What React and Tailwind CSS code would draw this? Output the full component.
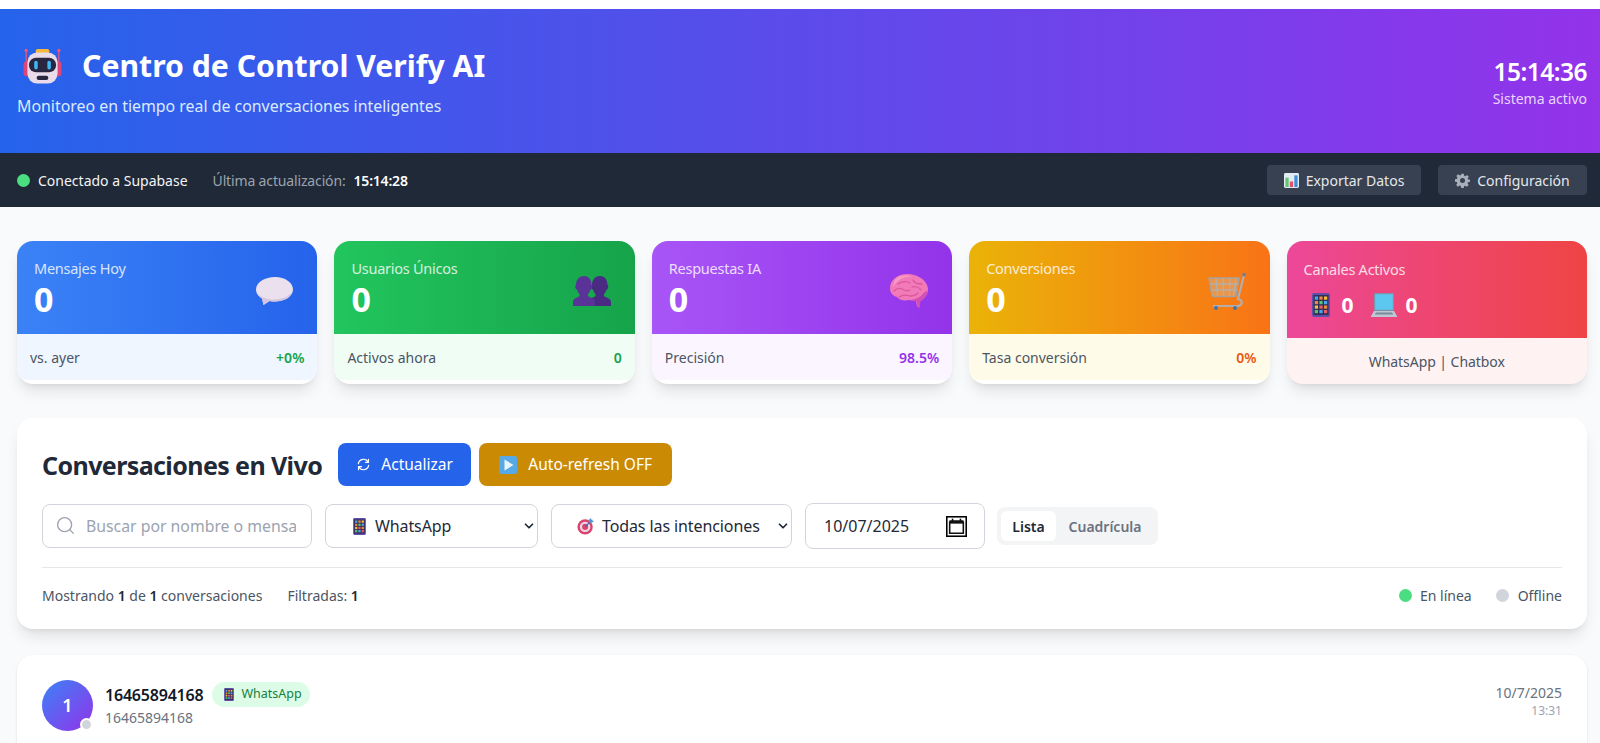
import React from 'react';
import { Search, ChevronDown } from 'lucide-react';

const Robot = ({ className }) => (
  <svg viewBox="0 0 40 37" className={className}>
    <rect x="2.6" y="3" width="1.3" height="14" fill="#e8567a" />
    <rect x="36.1" y="3" width="1.3" height="14" fill="#e8567a" />
    <circle cx="3.2" cy="2.5" r="1.7" fill="#f0567e" />
    <circle cx="36.8" cy="2.5" r="1.7" fill="#f0567e" />
    <rect x="0.5" y="14" width="6" height="15" rx="2.5" fill="#e0457a" />
    <rect x="33.5" y="14" width="6" height="15" rx="2.5" fill="#e0457a" />
    <rect x="13" y="1" width="14" height="5" rx="2" fill="#f5b83d" />
    <rect x="4.5" y="4.5" width="31" height="32" rx="10" fill="#e9dbe9" />
    <rect x="6" y="10" width="28" height="15" rx="7.5" fill="#29263f" />
    <rect x="11.5" y="13" width="3.6" height="9" rx="1.8" fill="#3fb7f5" />
    <rect x="25" y="13" width="3.6" height="9" rx="1.8" fill="#3fb7f5" />
    <rect x="14" y="28.5" width="12" height="4.5" rx="2.2" fill="#29263f" />
  </svg>
);

const Balloon = ({ className }) => (
  <svg viewBox="0 0 37 28" className={className}>
    <path d="M19 0C9 0 0 5 0 12.5c0 4 2.5 7 6 9l1.500 6.500 6-4c2 .5 3.500.5 5.500.5 10 0 18-5 18-12S29 0 19 0z" fill="#ebe0ee" />
    <path d="M2 17c3 3.500 9 5.500 16 5.500 8 0 15-3 18-8-1.500 6-9 10-17 10-2 0-3.500 0-5.500-.5l-6 4L6 21.500c-2-1-3.200-2.800-4-4.500z" fill="#d5c5dc" />
  </svg>
);

const Bust = ({ x, fill }) => (
  <path
    transform={`translate(${x} 0)`}
    d="M11 0c5 0 7.500 4 7.500 9 .8.200 1 1.500.5 3-.3 1-1 1.500-1.500 1.500-.5 2-1.500 3.500-2.500 4.500v2c1 1.500 7 2 7 6v4H0v-4c0-4 5.500-4.500 6.500-6v-2c-1-1-2-2.500-2.500-4.500-.5 0-1.200-.5-1.500-1.500-.5-1.500-.3-2.800.5-3C3 4 6 0 11 0z"
    fill={fill}
  />
);

const People = ({ className }) => (
  <svg viewBox="0 0 38 30" className={className}>
    <Bust x={16} fill="#4a2a82" />
    <Bust x={0} fill="#5a3398" />
  </svg>
);

const Brain = ({ className }) => (
  <svg viewBox="0 0 38 34" className={className}>
    <path d="M17 0C8 0 0 6 0 14c0 5 3 8 7 9 2 3 7 4 12 3 2 0 4 1 7 1l1 5 2 2 1-7c4-2 8-6 8-12C38 7 28 0 17 0z" fill="#f27ab8" />
    <path d="M20 26c6-.5 11-3 14-7.500l3.500-2c-.5 5-3.500 8.500-7 10.500l-1 7-2-2-1-5c-3 0-5.500-.5-6.500-1z" fill="#d44fb4" />
    <path d="M8 3c4-2 10-2 14-.5-5 0-10 1-14 4.500-2 1.500-4 4-5 6 0-4 2-8 5-10z" fill="#f79bc4" />
    <g fill="none" stroke="#d9589f" strokeWidth="1.300" strokeLinecap="round">
      <path d="M8 10c4-3 9-3 12-1" />
      <path d="M4 17c3-3 7-3 10-1 2 1 4 1 6 0" />
      <path d="M23 6c1 3 5 4 9 4" />
      <path d="M22 13c3-1 7 0 9 3" />
      <path d="M9 23c3-2 8-2 11-1 3 0 6-1 8-3" />
    </g>
  </svg>
);

const Cart = ({ className }) => (
  <svg viewBox="0 0 38 37" className={className}>
    <path d="M1 5h30l-3 17c-.2 1-1 1.500-2 1.500H6c-1 0-1.800-.5-2-1.500z" fill="#d8c6a8" fillOpacity=".35" stroke="#a8a29c" strokeWidth="1.600" />
    <path d="M8 5l1.500 18M15 5l.7 18M22 5l-.7 18M28 5l-2.500 18M2 11h28M3 17h26" fill="none" stroke="#b5afa8" strokeWidth="1.300" />
    <path d="M36 2l-6 24c5 1 5 6 0 7H5" fill="none" stroke="#b3aeaa" strokeWidth="2.200" />
    <rect x="34.5" y="0" width="3.2" height="3.2" fill="#6d7f99" />
    <circle cx="8" cy="35" r="2" fill="#4473a8" />
    <circle cx="27" cy="35" r="2" fill="#4473a8" />
  </svg>
);

const Phone = ({ className }) => (
  <svg viewBox="0 0 18 24" className={className}>
    <rect x="0" y="0" width="18" height="24" rx="2" fill="#5f4fa6" />
    <rect x="1.5" y="2" width="15" height="20" fill="#322e5c" />
    <rect x="2.8" y="3.5" width="3.2" height="3.2" fill="#4aa6ee" />
    <rect x="7.4" y="3.5" width="3.2" height="3.2" fill="#ee8a3c" />
    <rect x="12" y="3.5" width="3.2" height="3.2" fill="#f5c03d" />
    <rect x="2.8" y="8" width="3.2" height="3.2" fill="#ee8a3c" />
    <rect x="7.4" y="8" width="3.2" height="3.2" fill="#5cc46a" />
    <rect x="12" y="8" width="3.2" height="3.2" fill="#4aa6ee" />
    <rect x="2.8" y="12.5" width="3.2" height="3.2" fill="#f5c03d" />
    <rect x="7.4" y="12.5" width="3.2" height="3.2" fill="#e85d5d" />
    <rect x="12" y="12.5" width="3.2" height="3.2" fill="#ee8a3c" />
    <rect x="2.8" y="17" width="3.2" height="3.2" fill="#5cc46a" />
    <rect x="7.4" y="17" width="3.2" height="3.2" fill="#4aa6ee" />
    <rect x="12" y="17" width="3.2" height="3.2" fill="#e85d5d" />
  </svg>
);

const Laptop = ({ className }) => (
  <svg viewBox="0 0 26 24" className={className}>
    <rect x="3" y="0" width="20" height="18" rx="1" fill="#7f93a8" />
    <rect x="4.2" y="1.2" width="17.6" height="15.6" fill="#5cc8ef" />
    <path d="M3 18h20l3 5a.7.7 0 0 1-.6 1H.6a.7.7 0 0 1-.6-1z" fill="#bcc8d4" />
    <path d="M5 19.500h16l1.200 2H3.800z" fill="#7b8a9a" />
  </svg>
);

const Chart = ({ className }) => (
  <svg viewBox="0 0 16 16" className={className}>
    <rect x="0" y="0" width="16" height="16" rx="1.5" fill="#e4ecf3" />
    <rect x="1.5" y="5" width="3.5" height="10" fill="#62c471" />
    <rect x="6.2" y="9" width="3.5" height="6" fill="#e5506b" />
    <rect x="11" y="2.5" width="3.5" height="12.5" fill="#3f8fd6" />
  </svg>
);

const Gear = ({ className }) => (
  <svg viewBox="0 0 24 24" className={className}>
    <path
      fill="#a9b0ba"
      fillRule="evenodd"
      d="M10 1h4l.7 3.200 1.800.8L19.300 3.200l2.800 2.800-1.800 2.800.8 1.800L24 10v4l-3.200.7-.8 1.800 1.800 2.800-2.800 2.800-2.800-1.800-1.800.8L14 24h-4l-.7-3.200-1.800-.8-2.800 1.800-2.800-2.800 1.800-2.800-.8-1.800L0 14v-4l3.200-.7.8-1.800-1.800-2.800L5 2l2.800 1.800 1.800-.8zM12 8a4 4 0 1 0 0 8 4 4 0 0 0 0-8z"
    />
  </svg>
);

const Refresh = ({ className }) => (
  <svg viewBox="0 0 16 16" className={className} fill="none" stroke="#fff" strokeWidth="1.3" strokeLinecap="round" strokeLinejoin="round">
    <path d="M2.500 7A5.600 5.600 0 0 1 13 5.500" />
    <path d="M13.500 9A5.600 5.600 0 0 1 3 10.500" />
    <path d="M13.300 2.500v3.200h-3.200" />
    <path d="M2.700 13.500v-3.200h3.200" />
  </svg>
);

const PlayBox = ({ className }) => (
  <svg viewBox="0 0 18 18" className={className}>
    <rect x="0" y="0" width="18" height="18" rx="2.5" fill="#55a9e8" />
    <path d="M5.500 3.500l9 5.500-9 5.500z" fill="#eaf4fb" />
  </svg>
);

const Target = ({ className }) => (
  <svg viewBox="0 0 20 20" className={className}>
    <circle cx="9" cy="11" r="8.5" fill="#d9456f" />
    <circle cx="9" cy="11" r="5.8" fill="#eddde6" />
    <circle cx="9" cy="11" r="3.4" fill="#d9456f" />
    <path d="M9 11l8-8" stroke="#3b6fb5" strokeWidth="1.4" />
    <path d="M15 1l1 3 3 1-3 1.500-2.500-.5-.5-2.500z" fill="#4b9be0" />
  </svg>
);

const CalendarGlyph = () => (
  <svg viewBox="0 0 20 20" className="w-[21px] h-[21px]">
    <rect x="0" y="0" width="20" height="20" fill="#000" />
    <rect x="1.5" y="1.5" width="17" height="17" fill="#fff" />
    <path d="M3.500 6.500h13v10h-13z" fill="#fff" stroke="#111" strokeWidth="1.5" />
    <rect x="3" y="4" width="14" height="3" rx="1" fill="#111" />
    <rect x="5.5" y="2.5" width="1.5" height="2.5" fill="#111" />
    <rect x="13" y="2.5" width="1.5" height="2.5" fill="#111" />
  </svg>
);

const stats = [
  { label: 'Mensajes Hoy', top: 'bg-[linear-gradient(to_right,#3b82f6,#2563eb)]', bottom: 'bg-[#eff6ff]', foot: 'vs. ayer', extra: '+0%', extraColor: 'text-[#16a34a]', icon: <Balloon className="w-[37px] h-[28px]" /> },
  { label: 'Usuarios Únicos', top: 'bg-[linear-gradient(to_right,#22c55e,#16a34a)]', bottom: 'bg-[#f0fdf4]', foot: 'Activos ahora', extra: '0', extraColor: 'text-[#16a34a]', icon: <People className="w-[38px] h-[30px]" /> },
  { label: 'Respuestas IA', top: 'bg-[linear-gradient(to_right,#a855f7,#9333ea)]', bottom: 'bg-[#faf5ff]', foot: 'Precisión', extra: '98.5%', extraColor: 'text-[#9333ea]', icon: <Brain className="w-[38px] h-[34px]" /> },
  { label: 'Conversiones', top: 'bg-[linear-gradient(to_right,#eab308,#f97316)]', bottom: 'bg-[#fefce8]', foot: 'Tasa conversión', extra: '0%', extraColor: 'text-[#ea580c]', icon: <Cart className="w-[38px] h-[37px]" /> },
];

const StatCard = ({ item }) => (
  <div className="bg-white rounded-2xl shadow-lg overflow-hidden h-[143px]">
    <div className={`${item.top} h-[93px] pl-[17px] pr-[24px] flex items-center justify-between`}>
      <div className="text-white mt-[2px]">
        <div className="text-[14.5px] tracking-[-0.25px] leading-5 opacity-80">{item.label}</div>
        <div className="text-[34px] leading-10 font-bold mt-[1px]">0</div>
      </div>
      <div className="mt-[7px]">{item.icon}</div>
    </div>
    <div className={`${item.bottom} h-[46px] px-[13px] flex items-center justify-between text-[14px]`}>
      <span className="text-[#4b5563]">{item.foot}</span>
      <span className={`font-semibold ${item.extraColor}`}>{item.extra}</span>
    </div>
  </div>
);

const ChannelCard = () => (
  <div className="bg-[#fef2f2] rounded-2xl shadow-lg overflow-hidden h-[143px]">
    <div className="bg-[linear-gradient(to_right,#ec4899,#ef4444)] h-[97px] px-[17px] pt-[18px] text-white">
      <div className="text-[14.5px] tracking-[-0.25px] leading-5 opacity-80">Canales Activos</div>
      <div className="flex items-center mt-[14px] ml-[8px]">
        <Phone className="w-[18px] h-[24px]" />
        <span className="text-[21px] font-bold ml-[12px] leading-6">0</span>
        <Laptop className="w-[26px] h-[24px] ml-[17px]" />
        <span className="text-[21px] font-bold ml-[9px] leading-6">0</span>
      </div>
    </div>
    <div className="h-[46px] flex items-center justify-center text-[14px] tracking-[-0.05px] text-[#4b5563]">WhatsApp | Chatbox</div>
  </div>
);

const SelectBox = ({ icon, label, className }) => (
  <div className={`h-[44px] border border-[#d1d5db] rounded-lg bg-white flex items-center pl-[25px] pr-[1px] text-[16px] tracking-[-0.1px] text-[#1f2937] ${className}`}>
    {icon}
    <span className="ml-[7px] flex-1 whitespace-nowrap">{label}</span>
    <ChevronDown size={14} strokeWidth={3} className="text-[#1f2937]" />
  </div>
);

export default function App() {
  return (
    <div className="h-screen overflow-hidden bg-[#f9fafb] font-['Noto_Sans',sans-serif]">
      <div className="h-[9px] bg-white" />
      <header className="h-[144px] bg-[linear-gradient(to_right,#2563eb,#9333ea)] pl-[17px] pr-[13px] flex items-center justify-between text-white">
        <div className="mt-[1px]">
          <div className="flex items-center">
            <Robot className="w-[39px] h-[36px] ml-[6px]" />
            <h1 className="text-[30.2px] leading-10 font-bold ml-[20px]">Centro de Control Verify AI</h1>
          </div>
          <p className="text-[15.9px] leading-6 text-[#dbeafe] mt-[8px]">Monitoreo en tiempo real de conversaciones inteligentes</p>
        </div>
        <div className="text-right mt-[2px]">
          <div className="text-[24.5px] tracking-[-0.5px] leading-8 font-semibold">15:14:36</div>
          <div className="text-[14px] leading-5 text-[#e9d5ff] mt-[1px]">Sistema activo</div>
        </div>
      </header>

      <div className="h-[54px] bg-[#1f2937] pl-[17px] pr-[13px] flex items-center justify-between text-[14px]">
        <div className="flex items-center">
          <span className="w-[13px] h-[13px] rounded-full bg-[#4ade80]" />
          <span className="ml-[8px] text-[#f3f4f6]">Conectado a Supabase</span>
          <span className="ml-[25px] text-[#9ca3af] tracking-[-0.15px]">Última actualización:</span>
          <span className="ml-[8px] text-white font-semibold tracking-[-0.2px]">15:14:28</span>
        </div>
        <div className="flex items-center gap-[17px]">
          <button className="h-[30px] w-[154px] bg-[#374151] rounded flex items-center justify-center gap-[7px] text-[#e5e7eb]">
            <Chart className="w-[15px] h-[15px]" />
            Exportar Datos
          </button>
          <button className="h-[30px] w-[149px] bg-[#374151] rounded flex items-center justify-center gap-[7px] text-[#e5e7eb]">
            <Gear className="w-[15px] h-[15px]" />
            Configuración
          </button>
        </div>
      </div>

      <main className="pl-[17px] pr-[13px] pt-[34px]">
        <div className="grid grid-cols-5 gap-[17px]">
          {stats.map((s) => (
            <StatCard key={s.label} item={s} />
          ))}
          <ChannelCard />
        </div>

        <section className="mt-[34px] bg-white rounded-2xl shadow-lg h-[211px] px-[25px] pt-[25px]">
          <div className="flex items-center">
            <h2 className="text-[25px] tracking-[-0.6px] leading-8 font-bold text-[#1f2937]">Conversaciones en Vivo</h2>
            <button className="ml-[16px] h-[43px] w-[133px] bg-[#2563eb] text-white rounded-lg text-[15.5px] flex items-center justify-center gap-[10px]">
              <Refresh className="w-[15px] h-[15px]" />
              Actualizar
            </button>
            <button className="ml-[8px] h-[43px] w-[193px] bg-[#ca8a04] text-white rounded-lg text-[15.5px] flex items-center justify-center gap-[11px]">
              <PlayBox className="w-[18px] h-[18px]" />
              Auto-refresh OFF
            </button>
          </div>

          <div className="flex items-center mt-[17px]">
            <div className="relative w-[270px]">
              <Search size={21} strokeWidth={1.5} className="absolute left-[13px] top-[11px] text-[#9ca3af]" />
              <input
                placeholder="Buscar por nombre o mensaje..."
                className="w-full h-[44px] border border-[#d1d5db] rounded-lg pl-[43px] pr-[15px] text-[15.8px] placeholder:text-[#9ca3af] outline-none"
              />
            </div>
            <SelectBox className="w-[213px] ml-[13px]" icon={<Phone className="w-[13px] h-[17px] ml-[2px] mr-[2px]" />} label="WhatsApp" />
            <SelectBox className="w-[241px] ml-[13px]" icon={<Target className="w-[18px] h-[18px]" />} label="Todas las intenciones" />
            <div className="w-[180px] h-[46px] ml-[13px] border border-[#d1d5db] rounded-lg flex items-center justify-between pl-[18px] pr-[17px] text-[16px] text-[#1f2937]">
              10/07/2025
              <CalendarGlyph />
            </div>
            <div className="ml-[12px] w-[161px] h-[38px] bg-[#f3f4f6] rounded-lg p-[4px] flex items-center text-[14px] font-semibold">
              <span className="w-[55px] h-[30px] bg-white rounded-md flex items-center justify-center text-[#1f2937]">Lista</span>
              <span className="flex-1 text-center text-[#6b7280]">Cuadrícula</span>
            </div>
          </div>

          <div className="mt-[18px] border-t border-[#e5e7eb] pt-[17px] flex items-center justify-between text-[14px] text-[#4b5563]">
            <div className="flex items-center">
              <span>Mostrando <b className="font-semibold text-[#1f2937]">1</b> de <b className="font-semibold text-[#1f2937]">1</b> conversaciones</span>
              <span className="ml-[25px]">Filtradas: <b className="font-semibold text-[#1f2937]">1</b></span>
            </div>
            <div className="flex items-center">
              <span className="w-[13px] h-[13px] rounded-full bg-[#4ade80]" />
              <span className="ml-[8px]">En línea</span>
              <span className="ml-[24px] w-[13px] h-[13px] rounded-full bg-[#d1d5db]" />
              <span className="ml-[9px]">Offline</span>
            </div>
          </div>
        </section>

        <section className="mt-[26px] bg-white rounded-2xl shadow-sm h-[120px] px-[25px] pt-[25px] flex justify-between">
          <div className="flex">
            <div className="relative w-[51px] h-[51px] rounded-full bg-[linear-gradient(to_bottom_right,#3b82f6,#9333ea)] flex items-center justify-center text-white font-semibold text-[18px]">
              1
              <span className="absolute right-0 bottom-0 w-[13px] h-[13px] rounded-full bg-[#d1d5db] border-2 border-white" />
            </div>
            <div className="ml-[12px] pt-[2px]">
              <div className="flex items-center">
                <span className="text-[16px] tracking-[-0.2px] leading-6 font-semibold text-[#111827]">16465894168</span>
                <span className="ml-[9px] h-[25px] pl-[12px] pr-[8px] bg-[#dcfce7] text-[#15803d] rounded-full text-[12.5px] flex items-center gap-[7px]">
                  <Phone className="w-[10px] h-[13px]" />
                  WhatsApp
                </span>
              </div>
              <div className="text-[14px] leading-5 text-[#6b7280] mt-[1px]">16465894168</div>
            </div>
          </div>
          <div className="text-right pt-[3px]">
            <div className="text-[14px] leading-5 text-[#6b7280]">10/7/2025</div>
            <div className="text-[12px] leading-4 text-[#9ca3af]">13:31</div>
          </div>
        </section>
      </main>
    </div>
  );
}
